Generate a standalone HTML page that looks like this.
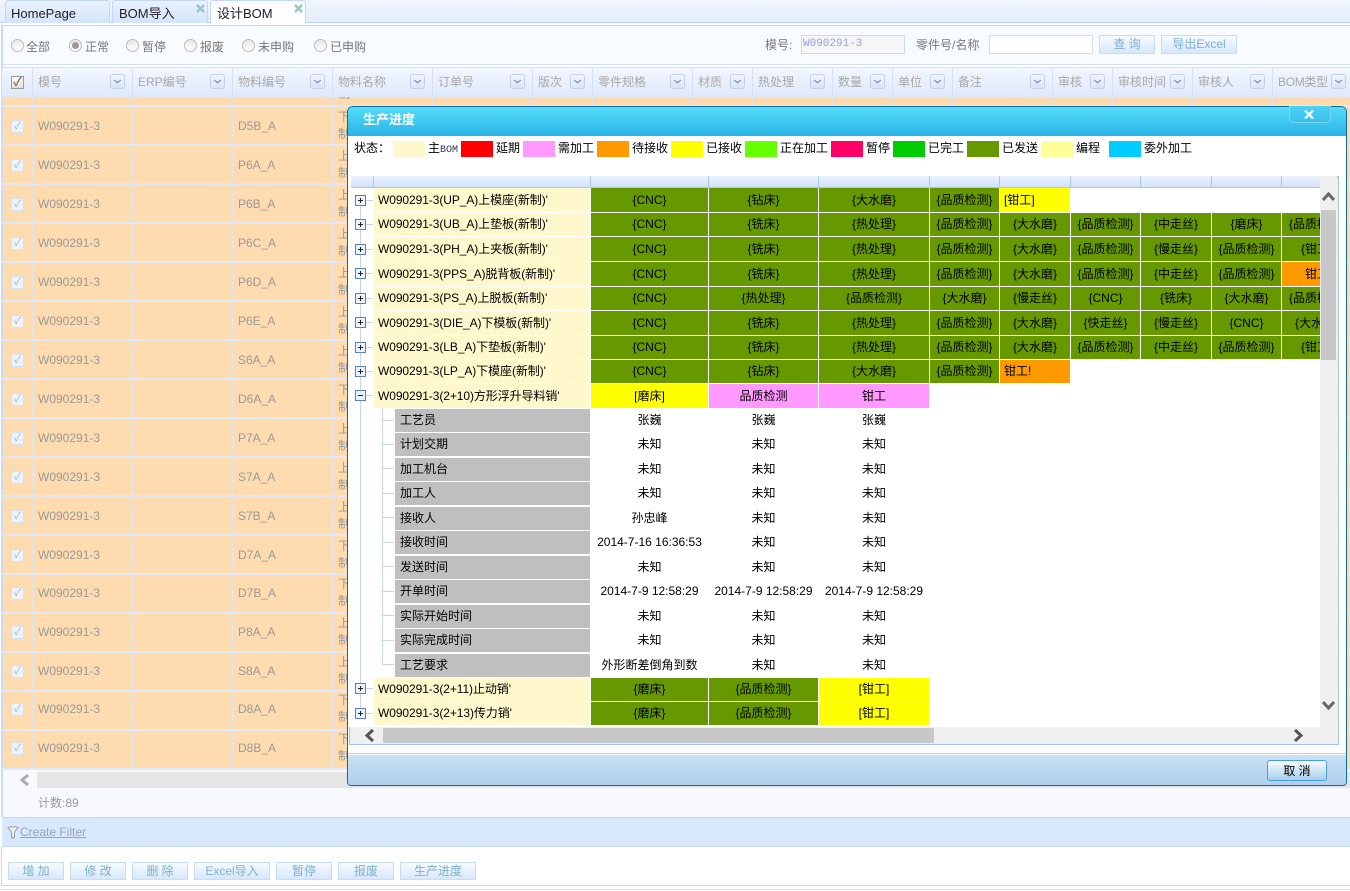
<!DOCTYPE html>
<html lang="zh"><head><meta charset="utf-8"><title>设计BOM</title>
<style>
html,body{margin:0;padding:0;width:1350px;height:891px;overflow:hidden;background:#fff}
body{position:relative;font:12px/16px "Liberation Sans","WenQuanYi Zen Hei","Noto Sans CJK SC",sans-serif;color:#888}
.a{position:absolute;white-space:nowrap}
.tab{position:absolute;top:0;height:22px;border:1px solid #c3d9f3;border-bottom:0;border-radius:3px 3px 0 0;background:linear-gradient(#eaf2fe,#d3e4fb);color:#222;font-size:13px;line-height:25px;box-sizing:content-box}
.rad{position:absolute;top:39px;width:11px;height:11px;border:1px solid #bbb;border-radius:50%;background:linear-gradient(#e8e8e8,#fff)}
.rl{position:absolute;top:39px;color:#777;font-size:12px}
.hb{position:absolute;top:68px;height:29px;border-right:1px solid #d4e0f4;box-sizing:border-box;color:#a8a8a8;line-height:28px;padding-left:5px;white-space:nowrap}
.hb i{position:absolute;top:6px;right:7px;width:13px;height:13px;border:1px solid #c3cdf0;border-radius:3px;background:linear-gradient(#f2f6fe,#d8e4f8)}
.hb i:after{content:"";position:absolute;left:3px;top:2px;width:5px;height:5px;border:solid #8f9db8;border-width:0 2px 2px 0;transform:scale(.8,.6) rotate(45deg)}
.vl{position:absolute;top:97px;height:673px;width:1px;background:#dfe6f3}
.hl{position:absolute;left:2px;width:1348px;height:2px;background:#e2e7f1}
.cb{position:absolute;left:11px;width:11px;height:11px;border:1px solid #d5e0f2;border-radius:2px;background:#edf3fc;color:#9eb0cc;font-size:10px;line-height:11px;text-align:center}
.t1{position:absolute;left:38px;color:#999}
.t2{position:absolute;left:238px;color:#999}
.t3{position:absolute;left:338px;color:#999;line-height:17px;width:12px;white-space:normal}
.btn{position:absolute;top:862px;height:16px;border:1px solid #c7ddf0;background:linear-gradient(#f7fbff,#d6e7fb);color:#7db0cf;text-align:center;line-height:16px;box-sizing:content-box;font-size:12px}
.sw{position:absolute;top:141px;width:32px;height:16px}
.lg{position:absolute;top:140px;color:#000}
#grid{position:absolute;left:349px;top:176px;width:971px;height:551px;overflow:hidden;background:#fff}
#grid table{position:absolute;left:2px;top:0;border-collapse:separate;border-spacing:0;table-layout:fixed;width:1002px;color:#000}
#grid td{padding:0 0 1px;border-right:1px solid #fff;border-bottom:1px solid #fff;text-align:center;white-space:nowrap;overflow:hidden;box-sizing:border-box;line-height:16px}
#grid tr.h td{height:12px;padding:0;background:linear-gradient(#e9f2ff,#d3e3fa);border-right:1px solid #a9c6ec;border-bottom:1px solid #a9c6ec;border-top:0;font-size:1px;line-height:1px}
#grid td.e{background:#fff}
#grid td.n{background:#fff8cc;text-align:left;padding-left:4px;letter-spacing:-.08px}
#grid td.g{background:#669900}
#grid td.y{background:#ff0}
#grid td.yl{background:#ff0;text-align:left;padding-left:4px}
#grid td.ol{background:#f90;text-align:left;padding-left:4px}
#grid td.o{background:#f90}
#grid td.p{background:#f9f}
#grid td.k{padding:0 0 0 21px;text-align:left;background:#fff}
#grid td.k div{background:#bfbfbf;height:23px;line-height:22px;padding-left:5px}
</style></head><body>

<!-- tabs -->
<div class="a" style="left:0;top:0;width:1350px;height:23px;background:linear-gradient(#f1f6fe,#e3edfc);border-bottom:1px solid #b8d3f1;box-sizing:border-box"></div>
<div class="a" style="left:0;top:23px;width:1350px;height:2px;background:#fff"></div>
<div class="tab" style="left:5px;width:98px;padding-left:5px">HomePage</div>
<div class="tab" style="left:112px;width:88px;padding-left:6px">BOM导入</div>
<div class="tab" style="left:210px;width:88px;padding-left:6px;height:23px;background:linear-gradient(#f9fbff,#fff)">设计BOM</div>
<svg class="a" style="left:196px;top:4px" width="9" height="9"><path d="M1 1L8 8M8 1L1 8" stroke="#9cc4c4" stroke-width="2.4" fill="none"/></svg>
<svg class="a" style="left:294px;top:4px" width="9" height="9"><path d="M1 1L8 8M8 1L1 8" stroke="#9cc4c4" stroke-width="2.4" fill="none"/></svg>

<!-- toolbar -->
<div class="a" style="left:2px;top:25px;width:1348px;height:38px;background:#f8fbff;border-top:1px solid #c3daf2;border-bottom:1px solid #cfe0f2;box-sizing:content-box"></div>
<div class="rad" style="left:11px"></div><div class="rl" style="left:26px">全部</div>
<div class="rad" style="left:69px"></div><div class="a" style="left:72px;top:42px;width:7px;height:7px;border-radius:50%;background:#999"></div><div class="rl" style="left:85px">正常</div>
<div class="rad" style="left:126px"></div><div class="rl" style="left:142px">暂停</div>
<div class="rad" style="left:184px"></div><div class="rl" style="left:200px">报废</div>
<div class="rad" style="left:242px"></div><div class="rl" style="left:258px">未申购</div>
<div class="rad" style="left:314px"></div><div class="rl" style="left:330px">已申购</div>
<div class="a" style="left:765px;top:37px;color:#777">模号:</div>
<div class="a" style="left:801px;top:35px;height:17px;border:1px solid #c7ddee;background:#f6f6f6;color:#8ea2e0;font:11px/17px 'Liberation Mono',monospace;padding-left:1px;box-sizing:content-box;width:101px">W090291-3</div>
<div class="a" style="left:916px;top:37px;color:#777">零件号/名称</div>
<div class="a" style="left:989px;top:35px;width:102px;height:17px;border:1px solid #cde0ef;background:#fff"></div>
<div class="btn" style="left:1099px;top:35px;width:54px;height:17px;line-height:17px">查 询</div>
<div class="btn" style="left:1161px;top:35px;width:74px;height:17px;line-height:17px">导出Excel</div>

<!-- background grid body -->
<div class="a" style="left:1px;top:25px;width:2px;height:792px;background:#c9dcf4"></div>
<div class="a" style="left:3px;top:97px;width:1347px;height:673px;background:#fedcb0"></div>
<div class="vl" style="left:32px"></div><div class="vl" style="left:132px"></div><div class="vl" style="left:232px"></div><div class="vl" style="left:332px"></div><div class="vl" style="left:432px"></div><div class="vl" style="left:532px"></div><div class="vl" style="left:592px"></div><div class="vl" style="left:692px"></div><div class="vl" style="left:752px"></div><div class="vl" style="left:832px"></div><div class="vl" style="left:892px"></div><div class="vl" style="left:952px"></div><div class="vl" style="left:1052px"></div><div class="vl" style="left:1112px"></div><div class="vl" style="left:1192px"></div><div class="vl" style="left:1272px"></div>
<div class="hl" style="top:105px"></div><div class="hl" style="top:144px"></div><div class="hl" style="top:183px"></div><div class="hl" style="top:222px"></div><div class="hl" style="top:261px"></div><div class="hl" style="top:300px"></div><div class="hl" style="top:339px"></div><div class="hl" style="top:378px"></div><div class="hl" style="top:417px"></div><div class="hl" style="top:456px"></div><div class="hl" style="top:495px"></div><div class="hl" style="top:534px"></div><div class="hl" style="top:573px"></div><div class="hl" style="top:612px"></div><div class="hl" style="top:651px"></div><div class="hl" style="top:690px"></div><div class="hl" style="top:729px"></div><div class="hl" style="top:768px"></div>
<div class="a" style="left:338px;top:97px;width:12px;height:5px;overflow:hidden;color:#999"><div style="margin-top:-11px">制</div></div>

<!-- header -->
<div class="a" style="left:2px;top:67px;width:1348px;height:30px;background:linear-gradient(#f2f6fe,#dfe9fb);border-top:1px solid #d6e1f3;box-sizing:border-box"></div>
<div class="hb" style="left:2px;width:31px"></div>
<div class="a" style="left:11px;top:76px;width:11px;height:11px;border:1px solid #999;background:linear-gradient(#fff,#ddd);color:#a06a50;font-size:12px;line-height:11px;text-align:center;font-weight:bold">✓</div>
<div class="hb" style="left:33px;width:100px">模号<i></i></div>
<div class="hb" style="left:133px;width:100px">ERP编号<i></i></div>
<div class="hb" style="left:233px;width:100px">物料编号<i></i></div>
<div class="hb" style="left:333px;width:100px">物料名称<i></i></div>
<div class="hb" style="left:433px;width:100px">订单号<i></i></div>
<div class="hb" style="left:533px;width:60px">版次<i></i></div>
<div class="hb" style="left:593px;width:100px">零件规格<i></i></div>
<div class="hb" style="left:693px;width:60px">材质<i></i></div>
<div class="hb" style="left:753px;width:80px">热处理<i></i></div>
<div class="hb" style="left:833px;width:60px">数量<i></i></div>
<div class="hb" style="left:893px;width:60px">单位<i></i></div>
<div class="hb" style="left:953px;width:100px">备注<i></i></div>
<div class="hb" style="left:1053px;width:60px">审核<i></i></div>
<div class="hb" style="left:1113px;width:80px">审核时间<i></i></div>
<div class="hb" style="left:1193px;width:80px">审核人<i></i></div>
<div class="hb" style="left:1273px;width:77px;border:0;letter-spacing:-.3px">BOM类型<i style="right:4px;letter-spacing:0"></i></div>

<!-- rows -->
<div class="cb" style="top:120px">✓</div><div class="a t1" style="top:118px">W090291-3</div><div class="a t2" style="top:118px">D5B_A</div><div class="t3" style="top:109px">下制</div>
<div class="cb" style="top:159px">✓</div><div class="a t1" style="top:157px">W090291-3</div><div class="a t2" style="top:157px">P6A_A</div><div class="t3" style="top:148px">上制</div>
<div class="cb" style="top:198px">✓</div><div class="a t1" style="top:196px">W090291-3</div><div class="a t2" style="top:196px">P6B_A</div><div class="t3" style="top:187px">上制</div>
<div class="cb" style="top:237px">✓</div><div class="a t1" style="top:235px">W090291-3</div><div class="a t2" style="top:235px">P6C_A</div><div class="t3" style="top:226px">上制</div>
<div class="cb" style="top:276px">✓</div><div class="a t1" style="top:274px">W090291-3</div><div class="a t2" style="top:274px">P6D_A</div><div class="t3" style="top:265px">上制</div>
<div class="cb" style="top:315px">✓</div><div class="a t1" style="top:313px">W090291-3</div><div class="a t2" style="top:313px">P6E_A</div><div class="t3" style="top:304px">上制</div>
<div class="cb" style="top:354px">✓</div><div class="a t1" style="top:352px">W090291-3</div><div class="a t2" style="top:352px">S6A_A</div><div class="t3" style="top:343px">上制</div>
<div class="cb" style="top:393px">✓</div><div class="a t1" style="top:391px">W090291-3</div><div class="a t2" style="top:391px">D6A_A</div><div class="t3" style="top:382px">下制</div>
<div class="cb" style="top:432px">✓</div><div class="a t1" style="top:430px">W090291-3</div><div class="a t2" style="top:430px">P7A_A</div><div class="t3" style="top:421px">上制</div>
<div class="cb" style="top:471px">✓</div><div class="a t1" style="top:469px">W090291-3</div><div class="a t2" style="top:469px">S7A_A</div><div class="t3" style="top:460px">上制</div>
<div class="cb" style="top:510px">✓</div><div class="a t1" style="top:508px">W090291-3</div><div class="a t2" style="top:508px">S7B_A</div><div class="t3" style="top:499px">上制</div>
<div class="cb" style="top:549px">✓</div><div class="a t1" style="top:547px">W090291-3</div><div class="a t2" style="top:547px">D7A_A</div><div class="t3" style="top:538px">下制</div>
<div class="cb" style="top:587px">✓</div><div class="a t1" style="top:585px">W090291-3</div><div class="a t2" style="top:585px">D7B_A</div><div class="t3" style="top:576px">下制</div>
<div class="cb" style="top:626px">✓</div><div class="a t1" style="top:624px">W090291-3</div><div class="a t2" style="top:624px">P8A_A</div><div class="t3" style="top:615px">上制</div>
<div class="cb" style="top:665px">✓</div><div class="a t1" style="top:663px">W090291-3</div><div class="a t2" style="top:663px">S8A_A</div><div class="t3" style="top:654px">上制</div>
<div class="cb" style="top:703px">✓</div><div class="a t1" style="top:701px">W090291-3</div><div class="a t2" style="top:701px">D8A_A</div><div class="t3" style="top:692px">下制</div>
<div class="cb" style="top:742px">✓</div><div class="a t1" style="top:740px">W090291-3</div><div class="a t2" style="top:740px">D8B_A</div><div class="t3" style="top:731px">下制</div>

<!-- bottom area -->
<div class="a" style="left:3px;top:770px;width:1347px;height:48px;background:#f7f9fe"></div>
<div class="a" style="left:37px;top:772px;width:1313px;height:16px;background:#e5e5e5"></div>
<svg class="a" style="left:18px;top:773px" width="14" height="14"><polyline points="10,2 4,7 10,12" fill="none" stroke="#aaa" stroke-width="3"/></svg>
<div class="a" style="left:38px;top:795px;color:#999">计数:89</div>
<div class="a" style="left:2px;top:817px;width:1348px;height:30px;background:#d8e8fd;border-top:1px solid #c6d9f1;border-bottom:1px solid #c6d9f1;box-sizing:border-box"></div>
<svg class="a" style="left:7px;top:826px" width="12" height="14"><path d="M1 1.5C3 .5 9 .5 11 1.5L7.5 6V11L6 12.5L4.5 11V6Z" fill="#eef2f8" stroke="#999"/></svg>
<div class="a" style="left:20px;top:824px;color:#99a3b5;text-decoration:underline">Create Filter</div>
<div class="btn" style="left:8px;width:54px">增 加</div>
<div class="btn" style="left:70px;width:54px">修 改</div>
<div class="btn" style="left:132px;width:54px">删 除</div>
<div class="btn" style="left:194px;width:74px">Excel导入</div>
<div class="btn" style="left:276px;width:54px">暂停</div>
<div class="btn" style="left:338px;width:54px">报废</div>
<div class="btn" style="left:400px;width:74px">生产进度</div>
<div class="a" style="left:1px;top:847px;width:1px;height:39px;background:#c6d9f1"></div>
<div class="a" style="left:1px;top:885px;width:1349px;height:1px;background:#c6d9f1"></div>
<div class="a" style="left:0;top:889px;width:1350px;height:1px;background:#d5e2f3"></div>

<!-- modal -->
<div class="a" style="left:347px;top:106px;width:1000px;height:680px;border:1px solid #0b6ba5;border-radius:6px 6px 4px 4px;background:#fff;box-sizing:border-box;overflow:hidden">
  <div class="a" style="left:0;top:0;width:1000px;height:29px;background:linear-gradient(#55dcfa,#29b4e6)"></div>
  <div class="a" style="left:0;top:646px;width:1000px;height:1px;background:#a9d3f0"></div>
  <div class="a" style="left:0;top:648px;width:1000px;height:31px;background:linear-gradient(#c8e0f5,#add0ec)"></div>
</div>
<div class="a" style="left:363px;top:112px;color:#fff;font-weight:bold;font-size:13px">生产进度</div>
<div class="a" style="left:1289px;top:106px;width:40px;height:16px;border:1px solid #7fd4f2;border-top:0;border-radius:0 0 5px 5px;background:linear-gradient(#4dd3f5,#38c0ec);box-sizing:content-box"></div>
<svg class="a" style="left:1304px;top:110px" width="10" height="9"><path d="M1 .5L9 8.5M9 .5L1 8.5" stroke="#fff" stroke-width="2.2" fill="none"/></svg>

<!-- legend -->
<div class="lg" style="left:354px">状态：</div>
<div class="sw" style="left:393px;background:#fff8cc"></div><div class="lg" style="left:428px">主<span style="font:10px/16px 'Liberation Mono',monospace;color:#336">BOM</span></div>
<div class="sw" style="left:461px;background:#f00"></div><div class="lg" style="left:496px">延期</div>
<div class="sw" style="left:523px;background:#f9f"></div><div class="lg" style="left:558px">需加工</div>
<div class="sw" style="left:597px;background:#f90"></div><div class="lg" style="left:632px">待接收</div>
<div class="sw" style="left:671px;background:#ff0"></div><div class="lg" style="left:706px">已接收</div>
<div class="sw" style="left:745px;background:#6f0"></div><div class="lg" style="left:780px">正在加工</div>
<div class="sw" style="left:831px;background:#f06"></div><div class="lg" style="left:866px">暂停</div>
<div class="sw" style="left:893px;background:#0c0"></div><div class="lg" style="left:928px">已完工</div>
<div class="sw" style="left:967px;background:#690"></div><div class="lg" style="left:1002px">已发送</div>
<div class="sw" style="left:1041px;background:#ff9"></div><div class="lg" style="left:1076px">编程</div>
<div class="sw" style="left:1109px;background:#0cf"></div><div class="lg" style="left:1144px">委外加工</div>

<!-- tree grid -->
<div class="a" style="left:349px;top:176px;width:990px;height:569px;border:1px solid #a3c5ec;border-top:2px solid #a3c5ec;box-sizing:border-box;background:#f0f0f0"></div>
<div id="grid">
<table>
<colgroup><col style="width:23px"><col style="width:217px"><col style="width:118px"><col style="width:110px"><col style="width:111px"><col style="width:70px"><col style="width:71px"><col style="width:70px"><col style="width:71px"><col style="width:70px"><col style="width:71px"></colgroup>
<tr class="h"><td></td><td></td><td></td><td></td><td></td><td></td><td></td><td></td><td></td><td></td><td></td></tr>
<tr style="height:25px"><td class="e"></td><td class="n">W090291-3(UP_A)上模座(新制)'</td><td class="g">{CNC}</td><td class="g">{钻床}</td><td class="g">{大水磨}</td><td class="g">{品质检测}</td><td class="yl">[钳工]</td><td class="e"></td><td class="e"></td><td class="e"></td><td class="e"></td></tr>
<tr style="height:24px"><td class="e"></td><td class="n">W090291-3(UB_A)上垫板(新制)'</td><td class="g">{CNC}</td><td class="g">{铣床}</td><td class="g">{热处理}</td><td class="g">{品质检测}</td><td class="g">{大水磨}</td><td class="g">{品质检测}</td><td class="g">{中走丝}</td><td class="g">{磨床}</td><td class="g">{品质检测}</td></tr>
<tr style="height:25px"><td class="e"></td><td class="n">W090291-3(PH_A)上夹板(新制)'</td><td class="g">{CNC}</td><td class="g">{铣床}</td><td class="g">{热处理}</td><td class="g">{品质检测}</td><td class="g">{大水磨}</td><td class="g">{品质检测}</td><td class="g">{慢走丝}</td><td class="g">{品质检测}</td><td class="g">{钳工}</td></tr>
<tr style="height:25px"><td class="e"></td><td class="n">W090291-3(PPS_A)脱背板(新制)'</td><td class="g">{CNC}</td><td class="g">{铣床}</td><td class="g">{热处理}</td><td class="g">{品质检测}</td><td class="g">{大水磨}</td><td class="g">{品质检测}</td><td class="g">{中走丝}</td><td class="g">{品质检测}</td><td class="o">钳工</td></tr>
<tr style="height:24px"><td class="e"></td><td class="n">W090291-3(PS_A)上脱板(新制)'</td><td class="g">{CNC}</td><td class="g">{热处理}</td><td class="g">{品质检测}</td><td class="g">{大水磨}</td><td class="g">{慢走丝}</td><td class="g">{CNC}</td><td class="g">{铣床}</td><td class="g">{大水磨}</td><td class="g">{品质检测}</td></tr>
<tr style="height:25px"><td class="e"></td><td class="n">W090291-3(DIE_A)下模板(新制)'</td><td class="g">{CNC}</td><td class="g">{铣床}</td><td class="g">{热处理}</td><td class="g">{品质检测}</td><td class="g">{大水磨}</td><td class="g">{快走丝}</td><td class="g">{慢走丝}</td><td class="g">{CNC}</td><td class="g">{大水磨}</td></tr>
<tr style="height:24px"><td class="e"></td><td class="n">W090291-3(LB_A)下垫板(新制)'</td><td class="g">{CNC}</td><td class="g">{铣床}</td><td class="g">{热处理}</td><td class="g">{品质检测}</td><td class="g">{大水磨}</td><td class="g">{品质检测}</td><td class="g">{中走丝}</td><td class="g">{品质检测}</td><td class="g">{钳工}</td></tr>
<tr style="height:24px"><td class="e"></td><td class="n">W090291-3(LP_A)下模座(新制)'</td><td class="g">{CNC}</td><td class="g">{钻床}</td><td class="g">{大水磨}</td><td class="g">{品质检测}</td><td class="ol">钳工!</td><td class="e"></td><td class="e"></td><td class="e"></td><td class="e"></td></tr>
<tr style="height:25px"><td class="e"></td><td class="n">W090291-3(2+10)方形浮升导料销'</td><td class="y">[磨床]</td><td class="p">品质检测</td><td class="p">钳工</td><td class="e" colspan="6"></td></tr>
<tr style="height:24px"><td class="e"></td><td class="k"><div>工艺员</div></td><td>张巍</td><td>张巍</td><td>张巍</td><td colspan="6"></td></tr>
<tr style="height:24px"><td class="e"></td><td class="k"><div>计划交期</div></td><td>未知</td><td>未知</td><td>未知</td><td colspan="6"></td></tr>
<tr style="height:25px"><td class="e"></td><td class="k"><div>加工机台</div></td><td>未知</td><td>未知</td><td>未知</td><td colspan="6"></td></tr>
<tr style="height:24px"><td class="e"></td><td class="k"><div>加工人</div></td><td>未知</td><td>未知</td><td>未知</td><td colspan="6"></td></tr>
<tr style="height:25px"><td class="e"></td><td class="k"><div>接收人</div></td><td>孙忠峰</td><td>未知</td><td>未知</td><td colspan="6"></td></tr>
<tr style="height:24px"><td class="e"></td><td class="k"><div>接收时间</div></td><td>2014-7-16 16:36:53</td><td>未知</td><td>未知</td><td colspan="6"></td></tr>
<tr style="height:25px"><td class="e"></td><td class="k"><div>发送时间</div></td><td>未知</td><td>未知</td><td>未知</td><td colspan="6"></td></tr>
<tr style="height:24px"><td class="e"></td><td class="k"><div>开单时间</div></td><td>2014-7-9 12:58:29</td><td>2014-7-9 12:58:29</td><td>2014-7-9 12:58:29</td><td colspan="6"></td></tr>
<tr style="height:25px"><td class="e"></td><td class="k"><div>实际开始时间</div></td><td>未知</td><td>未知</td><td>未知</td><td colspan="6"></td></tr>
<tr style="height:24px"><td class="e"></td><td class="k"><div>实际完成时间</div></td><td>未知</td><td>未知</td><td>未知</td><td colspan="6"></td></tr>
<tr style="height:25px"><td class="e"></td><td class="k"><div>工艺要求</div></td><td>外形断差倒角到数</td><td>未知</td><td>未知</td><td colspan="6"></td></tr>
<tr style="height:24px"><td class="e"></td><td class="n">W090291-3(2+11)止动销'</td><td class="g">{磨床}</td><td class="g">{品质检测}</td><td class="y">[钳工]</td><td class="e" colspan="6"></td></tr>
<tr style="height:24px"><td class="e"></td><td class="n">W090291-3(2+13)传力销'</td><td class="g">{磨床}</td><td class="g">{品质检测}</td><td class="y">[钳工]</td><td class="e" colspan="6"></td></tr>
</table>
</div>

<!-- tree lines and expanders -->
<svg class="a" style="left:0;top:0" width="1350" height="891">
<g stroke="#c5d5ee" fill="none">
<path d="M360.5 200V713.5"/>
<path d="M382.5 408V664.5"/>
<path d="M366 200.5H373M366 224.5H373M366 249.5H373M366 273.5H373M366 298.5H373M366 322.5H373M366 347.5H373M366 371.5H373M366 395.5H373M366 688.5H373M366 713.5H373"/>
<path d="M383 420.5H394M383 444.5H394M383 468.5H394M383 493.5H394M383 517.5H394M383 542.5H394M383 566.5H394M383 591.5H394M383 615.5H394M383 640.5H394M383 664.5H394"/>
</g>
<g fill="#eaf2fb" stroke="#5a82b4">
<rect x="355.5" y="195.5" width="10" height="10"/><rect x="355.5" y="219.5" width="10" height="10"/><rect x="355.5" y="244.5" width="10" height="10"/><rect x="355.5" y="268.5" width="10" height="10"/><rect x="355.5" y="293.5" width="10" height="10"/><rect x="355.5" y="317.5" width="10" height="10"/><rect x="355.5" y="342.5" width="10" height="10"/><rect x="355.5" y="366.5" width="10" height="10"/><rect x="355.5" y="390.5" width="10" height="10"/><rect x="355.5" y="683.5" width="10" height="10"/><rect x="355.5" y="708.5" width="10" height="10"/>
</g>
<g stroke="#222" fill="none">
<path d="M358 200.5H363M360.5 198V203M358 224.5H363M360.5 222V227M358 249.5H363M360.5 247V252M358 273.5H363M360.5 271V276M358 298.5H363M360.5 296V301M358 322.5H363M360.5 320V325M358 347.5H363M360.5 345V350M358 371.5H363M360.5 369V374M358 395.5H363M358 688.5H363M360.5 686V691M358 713.5H363M360.5 711V716"/>
</g>
</svg>

<!-- modal scrollbars -->
<div class="a" style="left:350px;top:727px;width:987px;height:17px;background:#f0f0f0"></div>
<div class="a" style="left:383px;top:728px;width:551px;height:15px;background:#c8c8c8"></div>
<div class="a" style="left:1320px;top:176px;width:17px;height:568px;background:#f0f0f0"></div>
<div class="a" style="left:1321px;top:210px;width:15px;height:150px;background:#c8c8c8"></div>
<svg class="a" style="left:1320px;top:190px" width="17" height="14"><polyline points="3,10 8.5,4 14,10" fill="none" stroke="#666" stroke-width="3"/></svg>
<svg class="a" style="left:1320px;top:698px" width="17" height="14"><polyline points="3,4 8.5,10 14,4" fill="none" stroke="#666" stroke-width="3"/></svg>
<svg class="a" style="left:363px;top:728px" width="14" height="15"><polyline points="10,2 4,7.5 10,13" fill="none" stroke="#555" stroke-width="3"/></svg>
<svg class="a" style="left:1291px;top:728px" width="14" height="15"><polyline points="4,2 10,7.5 4,13" fill="none" stroke="#555" stroke-width="3"/></svg>

<!-- cancel -->
<div class="a" style="left:1267px;top:760px;width:58px;height:19px;border:1px solid #4a9fd8;border-radius:3px;background:linear-gradient(#f6fbff,#a9cfee);color:#000;text-align:center;line-height:20px;box-sizing:content-box">取 消</div>
</body></html>
